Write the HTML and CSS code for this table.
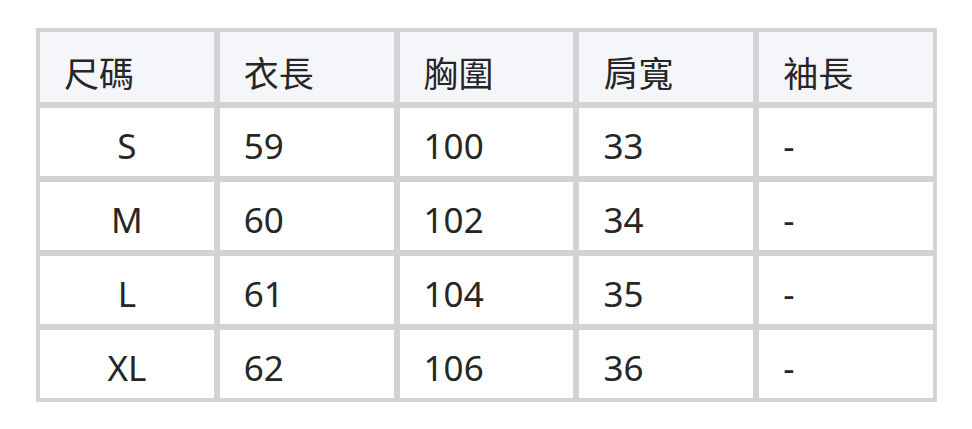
FILE: index.html
```html
<!DOCTYPE html>
<html lang="zh-Hant">
<head>
<meta charset="utf-8">
<title>尺碼表</title>
<link rel="stylesheet" href="styles.css">
</head>
<body>
<div class="page">
  <table class="size-table">
    <thead>
      <tr>
        <th>尺碼</th>
        <th>衣長</th>
        <th>胸圍</th>
        <th>肩寬</th>
        <th>袖長</th>
      </tr>
    </thead>
    <tbody>
      <tr><td class="size">S</td><td>59</td><td>100</td><td>33</td><td>-</td></tr>
      <tr><td class="size">M</td><td>60</td><td>102</td><td>34</td><td>-</td></tr>
      <tr><td class="size">L</td><td>61</td><td>104</td><td>35</td><td>-</td></tr>
      <tr><td class="size">XL</td><td>62</td><td>106</td><td>36</td><td>-</td></tr>
    </tbody>
  </table>
</div>
</body>
</html>
```

FILE: styles.css
```css
html, body {
  margin: 0;
  padding: 0;
  background: #ffffff;
}

.page {
  padding: 28px 0 0 36px;
}

.size-table {
  width: 901px;
  table-layout: fixed;
  border-collapse: separate;
  border-spacing: 2px;
  background: #d3d3d3;
  font-family: "Noto Sans", "Noto Sans CJK TC", sans-serif;
  font-size: 35px;
  color: #262626;
}

.size-table th,
.size-table td {
  border: 2px solid #d3d3d3;
  padding: 10px 24px 2px;
  line-height: 56px;
  text-align: left;
  font-weight: normal;
  white-space: nowrap;
}

.size-table th {
  background: #f5f6fa;
  padding: 14px 24px 0;
}

.size-table td {
  background: #ffffff;
}

.size-table td.size {
  text-align: center;
}
```
